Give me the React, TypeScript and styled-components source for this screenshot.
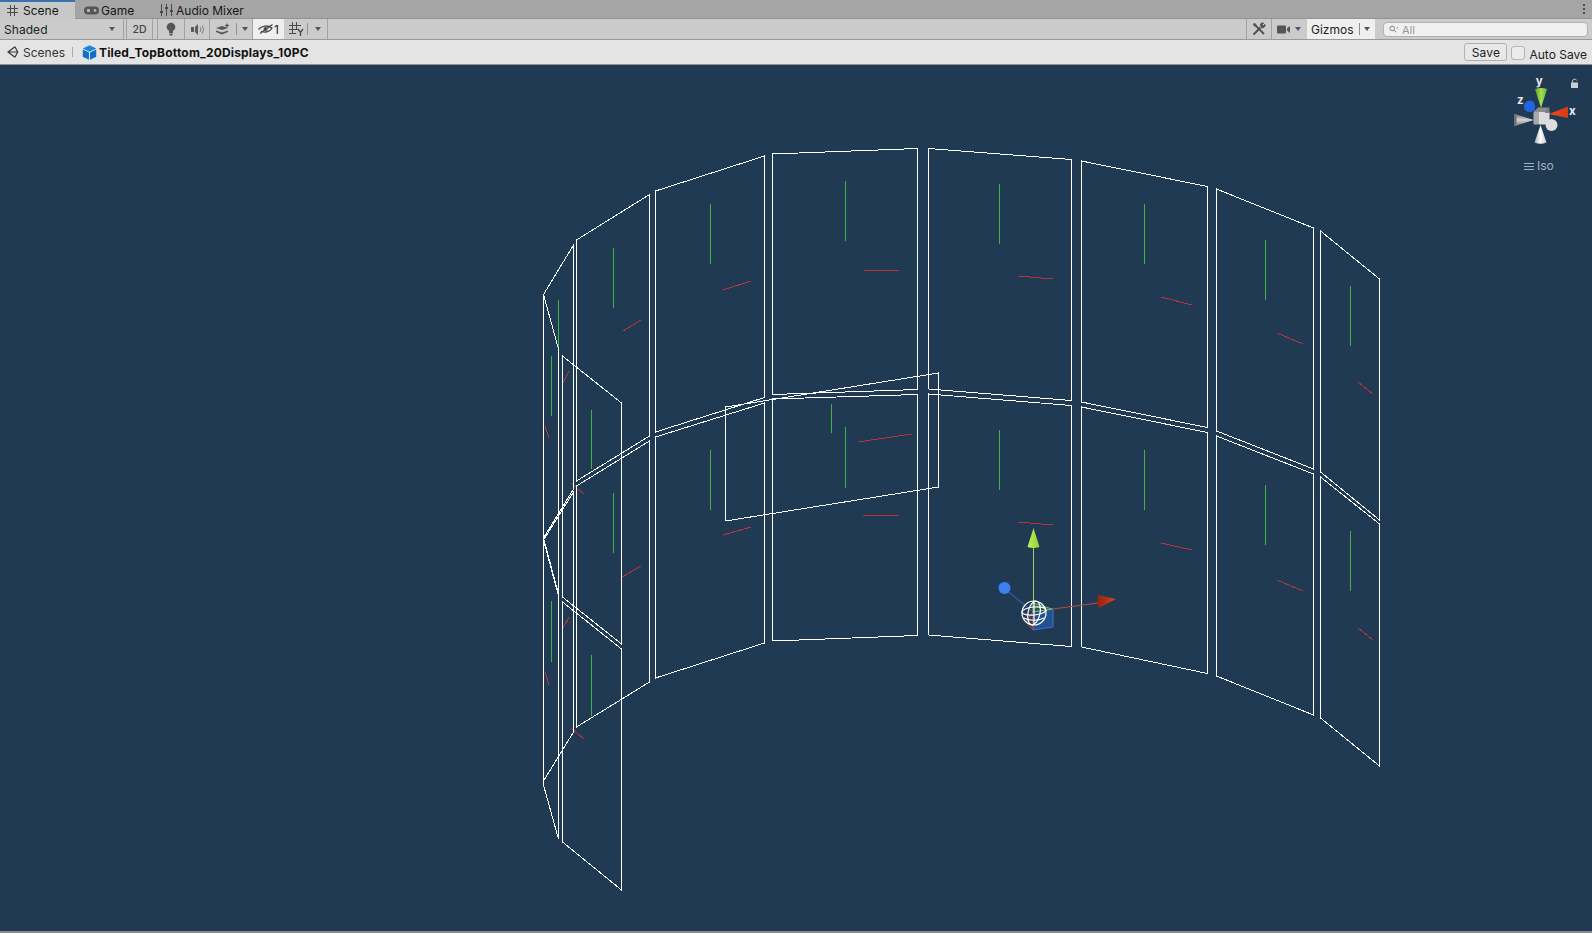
import React from "react";
import styled, { createGlobalStyle } from "styled-components";

const Global = createGlobalStyle`
  html, body { margin: 0; padding: 0; background: #8a8a8a; }
  #root { width: 1592px; height: 933px; overflow: hidden; }
  * { box-sizing: border-box; }
`;

const Window = styled.div`
  width: 1592px;
  height: 933px;
  display: flex;
  flex-direction: column;
  font-family: Inter, "Liberation Sans", sans-serif;
  font-size: 12px;
  color: #111;
  background: #8a8a8a;
  padding-bottom: 2px;
`;

const TabBar = styled.div`
  height: 19px;
  flex: none;
  display: flex;
  background: #a5a5a5;
  border-bottom: 1px solid #939393;
`;

const Tab = styled.div<{ $w: number; $active?: boolean; $pad: number; $gap: number }>`
  width: ${(p) => p.$w}px;
  height: ${(p) => (p.$active ? 19 : 18)}px;
  padding-left: ${(p) => p.$pad}px;
  display: flex;
  align-items: center;
  gap: ${(p) => p.$gap}px;
  background: ${(p) => (p.$active ? "#c8c8c8" : "transparent")};
  border-top: ${(p) => (p.$active ? "2px solid #3a72b0" : "2px solid transparent")};
  color: #161616;
`;

const MenuDots = styled.div`
  margin-left: auto;
  width: 14px;
  display: flex;
  flex-direction: column;
  align-items: center;
  justify-content: center;
  gap: 2px;
  padding-right: 3px;
  & > i {
    width: 2px;
    height: 2px;
    background: #4c4c4c;
    display: block;
  }
`;

const Toolbar = styled.div`
  height: 21px;
  flex: none;
  display: flex;
  background: #cbcbcb;
  border-bottom: 1px solid #999;
`;

const ToolButton = styled.div<{ $w: number; $on?: boolean; $line?: boolean; $lead?: boolean; $pl?: number }>`
  width: ${(p) => p.$w}px;
  flex: none;
  display: flex;
  align-items: center;
  justify-content: ${(p) => (p.$pl !== undefined ? "flex-start" : "center")};
  padding-left: ${(p) => p.$pl ?? 0}px;
  background: ${(p) => (p.$on ? "#efefef" : "transparent")};
  border-right: ${(p) => (p.$line ? "1px solid #a2a2a2" : "none")};
  border-left: ${(p) => (p.$lead ? "1px solid #a2a2a2" : "none")};
  color: #222;
`;

const DividerLeft = styled.div<{ $w: number }>`
  width: ${(p) => p.$w}px;
  flex: none;
  border-right: 1px solid #a2a2a2;
`;

const ShadedLabel = styled.span`
  flex: 1;
  letter-spacing: 0.05px;
`;

const SmallLabel = styled.span`
  font-size: 10.5px;
  font-weight: 500;
  color: #444;
`;

const Arrow = styled.i<{ $ml?: number; $mr?: number }>`
  display: block;
  width: 0;
  height: 0;
  margin-left: ${(p) => p.$ml ?? 0}px;
  margin-right: ${(p) => p.$mr ?? 0}px;
  border-left: 3.5px solid transparent;
  border-right: 3.5px solid transparent;
  border-top: 4px solid #555;
`;

const Spacer = styled.div`
  flex: 1;
`;

const InnerRule = styled.i<{ $mx?: string }>`
  display: block;
  align-self: center;
  width: 1px;
  height: 12px;
  background: #8f8f8f;
  margin: ${(p) => p.$mx ?? "0"};
`;

const SearchBox = styled.div`
  width: 205px;
  height: 15px;
  margin: 3px 4px 0 8px;
  flex: none;
  display: flex;
  align-items: center;
  gap: 3px;
  padding-left: 5px;
  background: #f0f0f0;
  border: 1px solid #b2b2b2;
  border-radius: 4px;
  color: #9a9a9a;
  font-size: 11px;
`;

const Breadcrumbs = styled.div`
  height: 25px;
  flex: none;
  display: flex;
  align-items: center;
  background: #e4e4e4;
  border-bottom: 1px solid #8f8f8f;
  padding: 0 5px 0 7px;
`;

const Crumb = styled.span`
  margin-left: 4px;
  color: #333;
`;

const CrumbRule = styled.i`
  display: block;
  width: 1px;
  height: 10px;
  background: #a8a8a8;
  margin: 0 9px 0 7px;
`;

const PrefabName = styled.b`
  margin-left: 2px;
  color: #111;
  font-weight: 700;
  letter-spacing: 0.18px;
`;

const SaveButton = styled.div`
  width: 43px;
  height: 18px;
  display: flex;
  align-items: center;
  justify-content: center;
  background: #e8e8e8;
  border: 1px solid #b0b0b0;
  border-radius: 3px;
  color: #222;
  letter-spacing: 0.2px;
`;

const AutoBox = styled.i`
  display: block;
  width: 14px;
  height: 14px;
  margin: 2px 4px 0 4px;
  background: #ececec;
  border: 1px solid #b4b4b4;
  border-radius: 3px;
`;

const AutoLabel = styled.span`
  margin-top: 4px;
  color: #222;
`;

const SceneView = styled.div`
  flex: 1;
  position: relative;
  background: #213a54;
  overflow: hidden;
`;

const SceneDrawing = styled.svg`
  display: block;
  width: 1592px;
  height: 866px;
`;

const IsoLabel = styled.div`
  position: absolute;
  left: 1524px;
  top: 94px;
  display: flex;
  align-items: center;
  gap: 3px;
  color: #a6afb8;
  font-size: 12px;
  line-height: 14px;
`;

const HashIcon = () => (
  <svg width="11" height="11" viewBox="0 0 11 11" fill="none" stroke="#4a4a4a" strokeWidth="1">
    <path d="M3.5 0v11M7.5 0v11M0 3.5h11M0 7.5h11" />
  </svg>
);
const GameIcon = () => (
  <svg width="15" height="9" viewBox="0 0 15 9">
    <rect x="0" y="0.5" width="15" height="8" rx="4" fill="#555" />
    <rect x="3" y="3" width="3" height="3" fill="#b0b0b0" />
    <circle cx="11" cy="4.5" r="1.4" fill="#b0b0b0" />
  </svg>
);
const MixerIcon = () => (
  <svg width="13" height="12" viewBox="0 0 13 12" stroke="#4a4a4a" fill="#4a4a4a">
    <path d="M1.5 0v12M6.5 0v12M11.5 0v12" />
    <rect x="0" y="7" width="3" height="2" stroke="none" />
    <rect x="5" y="3" width="3" height="2" stroke="none" />
    <rect x="10" y="6" width="3" height="2" stroke="none" />
  </svg>
);
const BulbIcon = () => (
  <svg width="12" height="14" viewBox="0 0 12 14" fill="#555">
    <circle cx="6" cy="5" r="4.3" />
    <rect x="4" y="9" width="4" height="2" />
    <rect x="4.5" y="11.5" width="3" height="2" />
  </svg>
);
const SpeakerIcon = () => (
  <svg width="13" height="11" viewBox="0 0 13 11" fill="#5a5a5a">
    <rect x="0" y="3" width="3" height="5" />
    <path d="M4 3l3-3v11l-3-3z" />
    <path d="M9 3c1 1.5 1 3.5 0 5M11 1.5c1.8 2.5 1.8 5.5 0 8" fill="none" stroke="#7a7a7a" />
  </svg>
);
const EffectsIcon = () => (
  <svg width="15" height="12" viewBox="0 0 15 12" fill="#555">
    <path d="M0 5l6 2 6-2-6-2z" />
    <path d="M0 7.5l6 2 6-2v1.5l-6 2.5-6-2.5z" />
    <path d="M11 0l.8 1.7 1.7.8-1.7.8-.8 1.700-.8-1.700-1.700-.8 1.700-.8z" />
  </svg>
);
const HiddenEye = () => (
  <svg width="16" height="12" viewBox="0 0 16 12" fill="none" stroke="#4a4a4a" strokeWidth="1.3">
    <path d="M0.5 6.5C3 3 10 1.5 14 5c-2 4-8 5-11 3" />
    <circle cx="7.5" cy="6" r="2" fill="#4a4a4a" stroke="none" />
    <path d="M2 10.5L14.5 1.5" />
  </svg>
);
const GridIcon = () => (
  <svg width="15" height="14" viewBox="0 0 15 14" fill="none" stroke="#4a4a4a">
    <path d="M3.5 0v11M7.5 0v8M0 3.5h12M0 7.5h9M0 11.5h7" />
    <path d="M9 7l2.5 3.500L14 7M11.500 10.500V14" strokeWidth="1.3" />
  </svg>
);
const ToolsIcon = () => (
  <svg width="14" height="14" viewBox="0 0 14 14" fill="none" stroke="#505050">
    <path d="M1.500 12.500L8.500 5.500" strokeWidth="2" />
    <path d="M8.200 3.200a2.800 2.800 0 0 1 3.500-2.200l-1.700 1.800 1.200 1.200 1.800-1.700a2.800 2.800 0 0 1-3.300 3.500z" fill="#505050" strokeWidth="0.8" />
    <path d="M3.500 3.500L12 12" strokeWidth="1.800" />
    <path d="M1 2.500L2.500 1l2 2.200-1.300 1.300z" fill="#505050" strokeWidth="0.6" />
  </svg>
);
const CameraIcon = () => (
  <svg width="13" height="9" viewBox="0 0 13 9" fill="#555">
    <rect x="0" y="0.5" width="9" height="8" rx="1" />
    <path d="M10 3.500l3-2.500v7l-3-2.500z" />
  </svg>
);
const SearchIcon = () => (
  <svg width="10" height="9" viewBox="0 0 10 9" fill="none" stroke="#808080">
    <circle cx="3.2" cy="3.4" r="2.3" />
    <path d="M5 5.2l2 2" />
    <path d="M7.5 2.500h2l-1 1.200z" fill="#808080" stroke="none" />
  </svg>
);
const UnityIcon = () => (
  <svg width="12" height="12" viewBox="0 0 12 12" fill="none" stroke="#3a3a3a" strokeWidth="1.2">
    <path d="M8 0.7L1 6l7 5.300M8 0.7l2.700 5.300L8 11.300M1 6h9.700" />
  </svg>
);
const CubeIcon = () => (
  <svg width="15" height="15" viewBox="0 0 14 14">
    <path d="M7 0.3L13.300 3.300 7 6.300 0.700 3.300z" fill="#1a86e0" />
    <path d="M0.7 4.200L6.500 7v6.800L0.700 11z" fill="#0f6fc6" />
    <path d="M13.300 4.200L7.500 7v6.800L13.300 11z" fill="#0f6fc6" />
  </svg>
);

type Pt = [number, number];
const quads: Pt[][] = [
  [[1320.5, 231], [1379.5, 279], [1379.5, 520], [1320.5, 472]],
  [[1320.5, 477], [1379.5, 524], [1379.5, 766], [1320.5, 718]],
  [[1216.5, 189], [1313.5, 228], [1313.5, 469], [1216.5, 431]],
  [[1216.5, 436], [1313.5, 474], [1313.5, 715], [1216.5, 676]],
  [[1081.5, 161], [1207.5, 186.5], [1207.5, 427.500], [1081.5, 402]],
  [[1081.5, 407], [1207.5, 432.5], [1207.5, 673.500], [1081.5, 647]],
  [[928.5, 148.5], [1071.5, 159.5], [1071.5, 400.500], [928.5, 389]],
  [[928.5, 394], [1071.5, 405.5], [1071.5, 646.500], [928.5, 635]],
  [[772.5, 154], [917.5, 148.5], [917.5, 389.500], [772.5, 394.500]],
  [[772.5, 399], [917.5, 394.5], [917.5, 635.500], [772.5, 641]],
  [[655.5, 191], [764.5, 156], [764.5, 397.500], [655.5, 432]],
  [[655.5, 437], [764.5, 403], [764.5, 643], [655.5, 678]],
  [[576.5, 240], [649.5, 194.5], [649.5, 436], [576.5, 481]],
  [[576.5, 486], [649.5, 441], [649.5, 682], [576.5, 727]],
  [[573.5, 245], [543.5, 294.5], [543.5, 538], [573.5, 489]],
  [[573.5, 492], [543.5, 540], [543.5, 781], [573.5, 732]],
  [[543.5, 294.5], [558.5, 349], [558.5, 594], [543.5, 538]],
  [[543.5, 540], [558.5, 596], [558.5, 839], [543.5, 785]],
  [[562.5, 356], [621.5, 403], [621.5, 644], [562.5, 597]],
  [[562.5, 602], [621.5, 649], [621.5, 890], [562.5, 842]],
  [[725.5, 407], [938.5, 373], [938.5, 487], [725.5, 521]],
];

const greens: [number, number, number][] = [
  [1350.5, 286, 346], [1350.5, 531, 591],
  [1265.5, 240, 300], [1265.5, 485, 545],
  [1144.5, 204, 264], [1144.5, 450, 510],
  [999.5, 184, 244], [999.5, 430, 490],
  [845.5, 181, 241], [845.5, 427, 488],
  [831.5, 404, 433],
  [710.5, 204, 264], [710.5, 450, 510],
  [613.5, 248, 308], [613.5, 493, 553],
  [558.5, 300, 348],
  [551.5, 356, 416], [551.5, 601, 662],
  [591.5, 410, 469], [591.5, 655, 716],
];

const reds: [number, number, number, number][] = [
  [623, 331, 641, 320], [622, 577, 641, 566],
  [563, 383, 569, 371], [563, 628, 569, 617],
  [545, 426, 549, 438], [545, 672, 549, 685],
  [571, 483, 584, 494], [571, 728, 584, 739],
  [858, 442, 912, 434], [863, 516, 900, 515],
  [723, 535, 751, 527], [723, 290, 751, 281],
  [864, 271, 900, 270],
  [1018, 276, 1053, 279], [1018, 522, 1053, 525],
  [1161, 297, 1192, 305], [1161, 543, 1192, 550],
  [1277, 333, 1303, 344], [1277, 580, 1303, 591],
  [1358, 382, 1373, 394], [1358, 628, 1373, 640],
];

const Handle = () => (
  <g>
    <path d="M1033.5 612L1033.5 546" stroke="#9fd36a" strokeWidth="1" />
    <path d="M1033 612L1053 609L1098 603" stroke="#b5503f" strokeWidth="1" />
    <path d="M1033 612L1004 588" stroke="#3c6fc0" strokeWidth="1" />
    <path d="M1033 630L1053 627V609L1033 612z" fill="#24508f" stroke="#3a74d0" />
    <path d="M1026 622L1033 630V612z" fill="#3a3a4a" stroke="#b5503f" />
    <path d="M1033 603L1052 609L1033 612z" fill="#2d5a4a" stroke="#7cc05a" />
    <path d="M1033.5 528L1039.5 547Q1033.5 549 1027.5 547z" fill="url(#gy)" />
    <path d="M1116 599L1098 595Q1096 602 1099 608z" fill="url(#gr)" />
    <path d="M997.5 584l4-3-2 7z" fill="#1c3f8e" />
    <circle cx="1004.5" cy="588" r="6" fill="#3c80ee" />
    <g fill="none" stroke="#fff" strokeWidth="1.2">
      <circle cx="1034" cy="613" r="12" />
      <ellipse cx="1034" cy="613" rx="6" ry="12" transform="rotate(12 1034 613)" />
      <ellipse cx="1034" cy="611" rx="12" ry="4" transform="rotate(-6 1034 611)" />
      <path d="M1034 601v24M1024 618c5 3 14 3 20 0" />
    </g>
  </g>
);

const NavGizmo = () => (
  <g>
    <path d="M1541 108L1547 89Q1541 87 1535 89z" fill="url(#gy2)" />
    <path d="M1535 112L1525 108a5.500 5.500 0 0 1 9-6z" fill="#1c58c8" />
    <circle cx="1529.5" cy="106.5" r="5.5" fill="#2166e0" />
    <path d="M1549 114L1568 106.5L1568 118z" fill="url(#gr2)" />
    <path d="M1534 120L1514.5 114V126z" fill="url(#gg)" />
    <rect x="1514" y="114" width="2.5" height="12" fill="#6e6e6e" />
    <path d="M1540.5 125L1546.5 142.5Q1540.5 145 1534.5 142.5z" fill="url(#gw)" />
    <path d="M1533.5 112L1538 107.5H1549.5L1545 112.5z" fill="#8b8b8b" />
    <path d="M1533.5 112H1539V124.5H1533.5z" fill="#a9a9a9" />
    <rect x="1539" y="112" width="10.5" height="12.5" fill="#dcdcdc" />
    <path d="M1545 112.5L1549.5 107.5V113H1545z" fill="#7f7f7f" />
    <circle cx="1551.5" cy="125" r="6" fill="#dedede" />
    <text x="1539.3" y="85" textAnchor="middle" fontSize="11.5" fontWeight="700" fill="#eaeaea">y</text>
    <text x="1572.3" y="114.5" textAnchor="middle" fontSize="11.5" fontWeight="700" fill="#eaeaea">x</text>
    <text x="1520.3" y="104" textAnchor="middle" fontSize="11.5" fontWeight="700" fill="#eaeaea">z</text>
    <rect x="1571" y="82.5" width="7" height="5.5" fill="#c9ced4" />
    <path d="M1572.5 82.5v-1.500a2.200 2.200 0 0 1 4.200-.5" fill="none" stroke="#c9ced4" />
  </g>
);

const IsoBars = () => (
  <svg width="10" height="9" viewBox="0 0 10 9" stroke="#a6afb8">
    <path d="M0 1.500h10M0 4.500h10M0 7.500h10" />
  </svg>
);

export default function App() {
  return (
    <>
      <Global />
      <Window>
        <TabBar>
          <Tab $w={75} $active $pad={7} $gap={5}>
            <HashIcon />
            Scene
          </Tab>
          <Tab $w={75} $pad={9} $gap={2}>
            <GameIcon />
            Game
          </Tab>
          <Tab $w={110} $pad={10} $gap={3}>
            <MixerIcon />
            Audio Mixer
          </Tab>
          <MenuDots>
            <i />
            <i />
            <i />
          </MenuDots>
        </TabBar>
        <Toolbar>
          <ToolButton $w={124} $pl={4} $line>
            <ShadedLabel>Shaded</ShadedLabel>
            <Arrow $mr={8} />
          </ToolButton>
          <DividerLeft $w={3} />
          <ToolButton $w={26} $line>
            <SmallLabel>2D</SmallLabel>
          </ToolButton>
          <DividerLeft $w={5} />
          <ToolButton $w={27} $line>
            <BulbIcon />
          </ToolButton>
          <ToolButton $w={25} $line>
            <SpeakerIcon />
          </ToolButton>
          <ToolButton $w={26}>
            <EffectsIcon />
          </ToolButton>
          <InnerRule />
          <ToolButton $w={16} $line>
            <Arrow />
          </ToolButton>
          <ToolButton $w={31} $on $pl={5}>
            <HiddenEye />
            <span>1</span>
          </ToolButton>
          <ToolButton $w={23} $pl={5}>
            <GridIcon />
          </ToolButton>
          <InnerRule />
          <ToolButton $w={20} $line>
            <Arrow />
          </ToolButton>
          <Spacer />
          <ToolButton $w={26} $line $lead>
            <ToolsIcon />
          </ToolButton>
          <ToolButton $w={35} $pl={5}>
            <CameraIcon />
            <Arrow $ml={5} />
          </ToolButton>
          <ToolButton $w={68} $on $pl={4}>
            <span>Gizmos</span>
            <InnerRule $mx="0 4px 0 5px" />
            <Arrow />
          </ToolButton>
          <SearchBox>
            <SearchIcon />
            All
          </SearchBox>
        </Toolbar>
        <Breadcrumbs>
          <UnityIcon />
          <Crumb>Scenes</Crumb>
          <CrumbRule />
          <CubeIcon />
          <PrefabName>Tiled_TopBottom_20Displays_10PC</PrefabName>
          <Spacer />
          <SaveButton>Save</SaveButton>
          <AutoBox />
          <AutoLabel>Auto Save</AutoLabel>
        </Breadcrumbs>
        <SceneView>
          <SceneDrawing viewBox="0 65 1592 866" fontFamily="Inter, 'Liberation Sans', sans-serif">
            <defs>
              <linearGradient id="gy" x1="0" x2="1" y1="0" y2="0">
                <stop offset="0" stopColor="#c6f060" />
                <stop offset="1" stopColor="#8fd02e" />
              </linearGradient>
              <linearGradient id="gr" x1="0" x2="1" y1="0" y2="0">
                <stop offset="0" stopColor="#8a2413" />
                <stop offset="1" stopColor="#e0401c" />
              </linearGradient>
              <linearGradient id="gy2" x1="0" x2="1" y1="0" y2="0">
                <stop offset="0" stopColor="#5c9e26" />
                <stop offset="0.5" stopColor="#a6e052" />
                <stop offset="1" stopColor="#6fb52c" />
              </linearGradient>
              <linearGradient id="gr2" x1="0" x2="1" y1="0" y2="0">
                <stop offset="0" stopColor="#f0481e" />
                <stop offset="1" stopColor="#d63a14" />
              </linearGradient>
              <linearGradient id="gg" x1="0" x2="0" y1="0" y2="1">
                <stop offset="0" stopColor="#707070" />
                <stop offset="0.5" stopColor="#d4d4d4" />
                <stop offset="1" stopColor="#7a7a7a" />
              </linearGradient>
              <linearGradient id="gw" x1="0" x2="1" y1="0" y2="0">
                <stop offset="0" stopColor="#aaaaaa" />
                <stop offset="0.5" stopColor="#ffffff" />
                <stop offset="1" stopColor="#c4c4c4" />
              </linearGradient>
            </defs>
            <g shapeRendering="crispEdges">
              {greens.map(([x, a, b], i) => (
                <path key={i} d={`M${x} ${a}V${b}`} stroke="#3fb544" strokeWidth="1" />
              ))}
              {reds.map(([a, b, c, d], i) => (
                <path key={i} d={`M${a} ${b}L${c} ${d}`} stroke="#b5353a" strokeWidth="1" />
              ))}
              {quads.map((q, i) => (
                <path
                  key={i}
                  d={`M${q.map((p) => p.join(" ")).join("L")}Z`}
                  fill="none"
                  stroke="#fff"
                  strokeWidth="1"
                />
              ))}
            </g>
            <Handle />
            <NavGizmo />
          </SceneDrawing>
          <IsoLabel>
            <IsoBars />
            Iso
          </IsoLabel>
        </SceneView>
      </Window>
    </>
  );
}
